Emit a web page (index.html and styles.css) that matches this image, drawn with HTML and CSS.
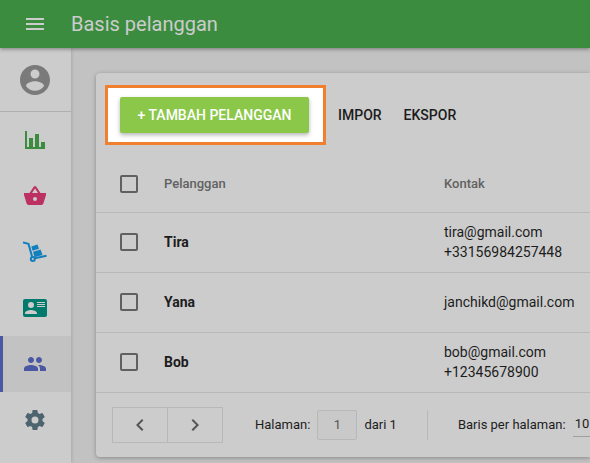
FILE: index.html
```html
<!DOCTYPE html>
<html lang="id">
<head>
<meta charset="utf-8">
<meta name="viewport" content="width=device-width, initial-scale=1">
<title>Basis pelanggan</title>
<link rel="stylesheet" href="styles.css">
</head>
<body>
<header class="topbar">
  <button class="menu" type="button" aria-label="Menu">
    <svg width="24" height="24" viewBox="0 0 24 24"><path d="M3 18h18v-2H3v2zm0-5h18v-2H3v2zm0-7v2h18V6H3z"/></svg>
  </button>
  <h1 class="title">Basis pelanggan</h1>
</header>
<div class="layout">
  <nav class="sidebar">
    <a class="account" href="#" aria-label="Akun">
      <svg width="36" height="36" viewBox="0 0 24 24"><path d="M12 2C6.480 2 2 6.480 2 12s4.480 10 10 10 10-4.480 10-10S17.520 2 12 2zm0 3c1.660 0 3 1.340 3 3s-1.340 3-3 3-3-1.340-3-3 1.340-3 3-3zm0 14.200c-2.500 0-4.710-1.280-6-3.220.030-1.990 4-3.080 6-3.080 1.990 0 5.970 1.090 6 3.080-1.290 1.940-3.500 3.220-6 3.220z"/></svg>
    </a>
    <a class="item stats" href="#" aria-label="Statistik">
      <svg width="24" height="24" viewBox="0 0 24 24"><path d="M2 3h2v16h2v-9h4v9h2V6h4v13h2v-5h4v7H2z"/></svg>
    </a>
    <a class="item sales" href="#" aria-label="Penjualan">
      <svg width="24" height="24" viewBox="0 0 24 24"><path fill-rule="evenodd" d="M1 9h5.500l4.200-6.300q1.300-1.500 2.600 0L17.500 9H23v2l-2.600 8.600Q20 21 18.500 21h-13q-1.500 0-1.900-1.400L1 11zM9 9h6l-3-4.600zM12 13a2 2 0 1 0 0 4 2 2 0 0 0 0-4z"/></svg>
    </a>
    <a class="item stock" href="#" aria-label="Inventaris">
      <svg width="24" height="24" viewBox="0 0 24 24">
        <path class="line" d="M0 2.500l5.500 1.400 3.600 12.800M11.800 18.300l11.700-2.500"/>
        <circle class="line" cx="9.800" cy="19" r="2"/>
        <path d="M8.300 6.400l6.200-1.800 1.500 4.200-6.500 2zM10 11.700l7.600-2.300 1.900 5.600-8 2.200z"/>
      </svg>
    </a>
    <a class="item staff" href="#" aria-label="Karyawan">
      <svg width="24" height="24" viewBox="0 0 24 24"><path fill-rule="evenodd" d="M2 3h20a2 2 0 0 1 2 2v14a2 2 0 0 1-2 2H2a2 2 0 0 1-2-2V5a2 2 0 0 1 2-2zM14 6v1h8V6zM14 8v1h8V8zM14 10v1h8v-1zM8 6a3 3 0 1 0 0 6 3 3 0 0 0 0-6zM2 17v1h12v-1c0-2-4-3.100-6-3.100S2 15 2 17z"/></svg>
    </a>
    <a class="item customers active" href="#" aria-label="Pelanggan">
      <svg width="24" height="24" viewBox="0 0 24 24"><path d="M16 11c1.660 0 2.990-1.340 2.990-3S17.660 5 16 5s-3 1.340-3 3 1.340 3 3 3zm-8 0c1.660 0 2.990-1.340 2.990-3S9.660 5 8 5 5 6.340 5 8s1.340 3 3 3zm0 2c-2.330 0-7 1.170-7 3.500V19h14v-2.500C15 14.170 10.330 13 8 13zm8 0c-.290 0-.620.020-.970.050 1.160.840 1.970 1.970 1.970 3.450V19h6v-2.500c0-2.330-4.670-3.500-7-3.500z"/></svg>
    </a>
    <a class="item settings" href="#" aria-label="Pengaturan">
      <svg width="24" height="24" viewBox="0 0 24 24"><path d="M12 15.500A3.500 3.500 0 0 1 8.500 12 3.500 3.500 0 0 1 12 8.500a3.500 3.500 0 0 1 3.500 3.500 3.500 3.500 0 0 1-3.500 3.500m7.430-2.530c.040-.320.070-.640.070-.970s-.030-.660-.070-1l2.110-1.630c.190-.150.240-.420.120-.640l-2-3.460c-.120-.220-.390-.310-.610-.220l-2.490 1c-.520-.390-1.060-.730-1.690-.980l-.370-2.650A.506.506 0 0 0 14 2h-4c-.250 0-.460.180-.500.420l-.370 2.650c-.630.250-1.170.590-1.690.980l-2.490-1c-.220-.090-.490 0-.610.220l-2 3.460c-.130.220-.070.490.120.640L4.570 11c-.040.340-.070.670-.070 1s.030.650.070.970l-2.110 1.660c-.190.150-.250.420-.120.640l2 3.460c.120.220.390.300.610.220l2.490-1.010c.520.400 1.060.740 1.690.990l.370 2.650c.040.240.250.420.500.420h4c.250 0 .460-.180.500-.420l.370-2.650c.630-.260 1.170-.590 1.690-.990l2.490 1.010c.220.080.490 0 .610-.220l2-3.460c.120-.220.070-.490-.120-.640z"/></svg>
    </a>
  </nav>
  <main class="content">
    <section class="card">
      <div class="toolbar">
        <div class="spotlight"><button class="add" type="button">+ TAMBAH PELANGGAN</button></div>
        <button class="action" type="button">IMPOR</button>
        <button class="action" type="button">EKSPOR</button>
      </div>
      <table class="customers-table">
        <thead>
          <tr><th class="pick"><input type="checkbox" aria-label="Pilih semua"></th><th class="name">Pelanggan</th><th>Kontak</th></tr>
        </thead>
        <tbody>
          <tr><td class="pick"><input type="checkbox" aria-label="Pilih Tira"></td><td class="name">Tira</td><td>tira@gmail.com<br>+33156984257448</td></tr>
          <tr><td class="pick"><input type="checkbox" aria-label="Pilih Yana"></td><td class="name">Yana</td><td>janchikd@gmail.com</td></tr>
          <tr><td class="pick"><input type="checkbox" aria-label="Pilih Bob"></td><td class="name">Bob</td><td>bob@gmail.com<br>+12345678900</td></tr>
        </tbody>
      </table>
      <footer class="pagination">
        <div class="pager">
          <button type="button" aria-label="Sebelumnya"><svg width="24" height="24" viewBox="0 0 24 24"><path d="M15.410 7.410L14 6l-6 6 6 6 1.410-1.410L10.830 12z"/></svg></button>
          <button type="button" aria-label="Berikutnya"><svg width="24" height="24" viewBox="0 0 24 24"><path d="M10 6L8.590 7.410 13.170 12l-4.580 4.590L10 18l6-6z"/></svg></button>
        </div>
        <div class="page">
          <label for="page">Halaman:</label>
          <input id="page" type="text" value="1">
          <span>dari 1</span>
        </div>
        <div class="rows">
          <label for="rows">Baris per halaman:</label>
          <select id="rows"><option>10</option><option>25</option><option>50</option></select>
        </div>
      </footer>
    </section>
  </main>
</div>
</body>
</html>
```
FILE: styles.css
```css
* {
  box-sizing: border-box;
}

body {
  margin: 0;
  min-height: 100vh;
  display: flex;
  flex-direction: column;
  overflow: hidden;
  background: #c2c2c2;
  color: #1c1c1c;
  font: 14px/20px Roboto, sans-serif;
}

button,
input,
select {
  margin: 0;
  padding: 0;
  border: 0;
  border-radius: 0;
  background: none;
  color: inherit;
  font: inherit;
}

svg {
  display: block;
  fill: currentColor;
}

.topbar {
  position: relative;
  z-index: 2;
  display: flex;
  align-items: center;
  height: 48px;
  background: #3c8c40;
  color: #cccccc;
  box-shadow: 0 1px 4px rgba(0, 0, 0, 0.4);
}

.menu {
  display: flex;
  justify-content: center;
  width: 71px;
  padding-right: 1px;
}

.title {
  margin: 0;
  font-size: 20px;
  font-weight: 400;
  line-height: 24px;
}

.layout {
  flex: 1;
  display: flex;
}

.sidebar {
  flex: none;
  width: 71px;
  background: #cccccc;
  box-shadow: 0 0 4px rgba(0, 0, 0, 0.2);
}

.account,
.item {
  display: flex;
  align-items: center;
  justify-content: center;
  padding-right: 1px;
}

.account {
  height: 64px;
  border-bottom: 1px solid #b0b0b0;
  color: #7a7a7a;
}

.item {
  height: 56px;
}

.stats { color: #3c8c40; }
.sales { color: #bd3062; }
.stock { color: #147fbd; }
.staff { color: #007a6d; }
.customers { color: #4a57a3; }
.settings { color: #4d646f; }

.active {
  background: #c2c2c2;
  box-shadow: inset 3px 0 #4a57a3;
}

.line {
  fill: none;
  stroke: currentColor;
  stroke-width: 2;
}

.content {
  flex: 1;
  min-width: 0;
  padding: 25px 0 6px 25px;
}

.card {
  border-radius: 4px 0 0 4px;
  background: #cccccc;
  box-shadow: 0 1px 4px rgba(0, 0, 0, 0.3);
}

.toolbar {
  display: flex;
  align-items: center;
  padding: 12px 9px 11px;
}

.spotlight {
  margin-right: 12px;
  padding: 9px 14px 9px 12px;
  border: 3px solid #f08030;
  background: #ffffff;
}

.add {
  display: block;
  min-width: 189px;
  height: 36px;
  padding: 0 16px;
  border-radius: 2px;
  background: #8bc84a;
  color: #ffffff;
  font-weight: 500;
  white-space: nowrap;
  box-shadow: 0 2px 4px rgba(0, 0, 0, 0.3);
}

.action {
  margin-right: 22px;
  font-weight: 500;
}

.customers-table {
  width: 100%;
  table-layout: fixed;
  border-collapse: collapse;
}

.customers-table th,
.customers-table td {
  height: 60px;
  padding: 0;
  border-bottom: 1px solid #b8b8b8;
  text-align: left;
}

.customers-table th {
  height: 56px;
  color: #616161;
  font-size: 13px;
  font-weight: 500;
}

.customers-table .pick {
  width: 68px;
  padding-left: 24px;
}

.customers-table .name {
  width: 280px;
}

td.name {
  font-weight: 700;
}

.pick input {
  appearance: none;
  display: block;
  width: 18px;
  height: 18px;
  border: 2px solid #606060;
  border-radius: 2px;
}

.pagination {
  display: flex;
  align-items: center;
  height: 64px;
  padding-left: 16px;
  overflow: hidden;
  font-size: 13px;
  white-space: nowrap;
}

.pager {
  flex: none;
  display: flex;
  border: 1px solid #b8b8b8;
  color: #555555;
}

.pager button {
  display: flex;
  align-items: center;
  justify-content: center;
  width: 54px;
  height: 34px;
}

.pager button + button {
  width: 55px;
  border-left: 1px solid #b8b8b8;
}

.page {
  flex: none;
  display: flex;
  align-items: center;
  gap: 7px;
  height: 30px;
  margin-left: 32px;
  padding-right: 30px;
  border-right: 1px solid #b8b8b8;
}

.page input {
  width: 40px;
  height: 30px;
  border: 1px solid #b8b8b8;
  border-radius: 2px;
  background: #c9c9c9;
  color: #555555;
  text-align: center;
}

.rows {
  flex: none;
  display: flex;
  align-items: center;
  gap: 7px;
  margin-left: 30px;
}

.rows select {
  appearance: none;
  width: 48px;
  height: 24px;
  padding-left: 2px;
  border-bottom: 1px solid #a0a0a0;
}
```
